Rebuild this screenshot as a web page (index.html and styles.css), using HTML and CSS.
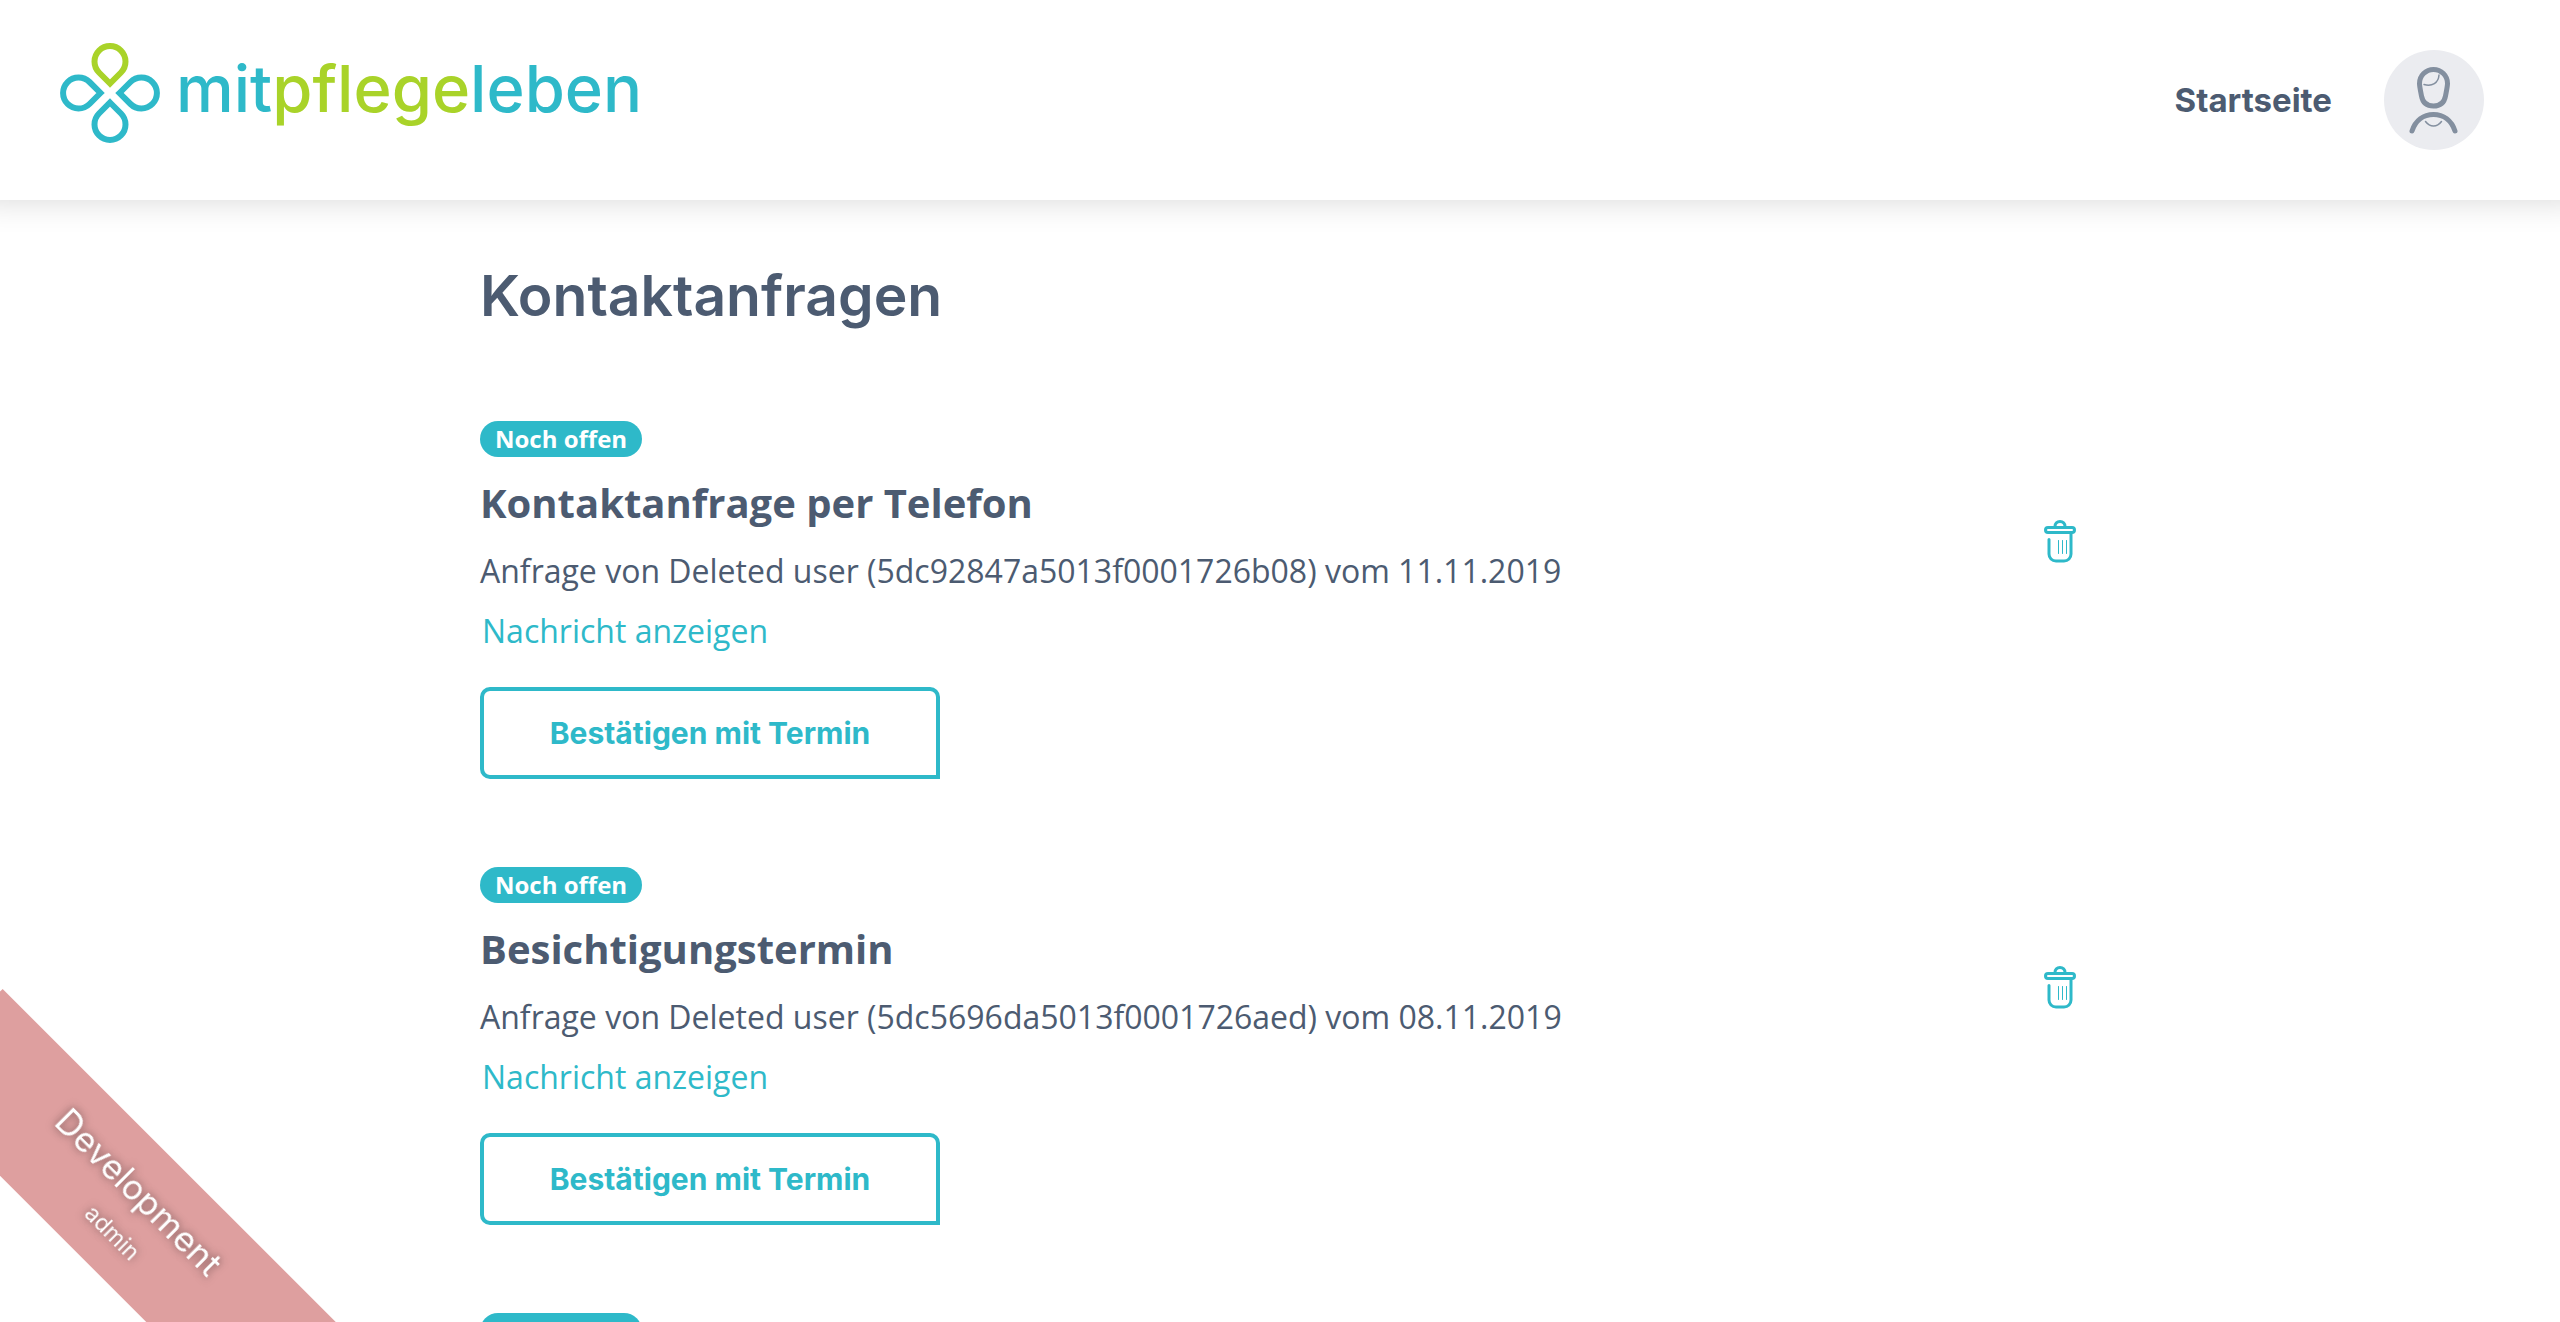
FILE: index.html
```html
<!DOCTYPE html>
<html lang="de">
<head>
<meta charset="utf-8">
<meta name="viewport" content="width=device-width, initial-scale=1">
<title>Kontaktanfragen – mitpflegeleben</title>
<link rel="stylesheet" href="styles.css">
</head>
<body>
<svg class="sprite" aria-hidden="true">
  <symbol id="trash" viewBox="24 20 32 43">
    <g fill="none" stroke="currentColor" stroke-width="3" stroke-linecap="round" stroke-linejoin="round">
      <path d="M35 26.500c0-3 2-5 5-5s5 2 5 5"/>
      <rect x="25.500" y="27.500" width="29" height="5" rx="2.500"/>
      <path d="M29 39.500V54c0 4 3 7 7 7h8c4 0 7-3 7-7V33"/>
      <path stroke-width="1" d="M38.500 40.500v13M42.500 40.500v13M46.500 40.500v13"/>
    </g>
  </symbol>
</svg>
<header class="site-header">
  <a class="logo" href="#">
    <svg class="logo-mark" viewBox="0 0 100 100" aria-hidden="true">
      <g fill="none" stroke-width="6" stroke-linejoin="miter">
        <path class="leaf-green" d="M50 40.500l-11-11a15.500 15.500 0 1 1 22 0z"/>
        <path class="leaf-teal" d="M50 40.500l-11-11a15.500 15.500 0 1 1 22 0z" transform="rotate(90 50 50)"/>
        <path class="leaf-teal" d="M50 40.500l-11-11a15.500 15.500 0 1 1 22 0z" transform="rotate(180 50 50)"/>
        <path class="leaf-teal" d="M50 40.500l-11-11a15.500 15.500 0 1 1 22 0z" transform="rotate(270 50 50)"/>
      </g>
    </svg>
    <span class="logo-text">mit<span class="logo-accent">pflege</span>leben</span>
  </a>
  <nav class="main-nav">
    <a class="nav-link" href="#">Startseite</a>
    <button class="avatar" type="button" aria-label="Benutzerkonto">
      <svg viewBox="0 0 100 100" fill="none" stroke="#838f9f" stroke-width="5" stroke-linecap="round" aria-hidden="true">
        <path d="M35.500 33.500a14 14 0 0 1 28 0c0 3-1.300 8.500-2 12.500c-1.200 6.500-5.500 10-12 10s-10.800-3.500-12-10c-.700-4-2-9.500-2-12.500z"/>
        <path stroke-width="1.500" d="M40 34.500c8 2.300 14.500-1.500 15-9.500"/>
        <path d="M28 81c3.500-10.500 11.500-16.500 21.500-16.500S67.500 70.500 71 81"/>
        <path stroke-width="1.500" d="M41.500 71.500c4.500 6 11.500 6 16 0"/>
      </svg>
    </button>
  </nav>
</header>
<main class="content">
  <h1 class="page-title">Kontaktanfragen</h1>
  <ul class="requests">
    <li class="request">
      <div class="request-row">
        <div class="request-info">
          <span class="badge">Noch offen</span>
          <h2 class="request-title">Kontaktanfrage per Telefon</h2>
          <p class="request-meta">Anfrage von Deleted user (5dc92847a5013f0001726b08) vom 11.11.2019</p>
          <button class="text-button" type="button">Nachricht anzeigen</button>
        </div>
        <button class="delete" type="button" aria-label="Löschen"><svg aria-hidden="true"><use href="#trash"/></svg></button>
      </div>
      <button class="confirm" type="button">Bestätigen mit Termin</button>
    </li>
    <li class="request">
      <div class="request-row">
        <div class="request-info">
          <span class="badge">Noch offen</span>
          <h2 class="request-title">Besichtigungstermin</h2>
          <p class="request-meta">Anfrage von Deleted user (5dc5696da5013f0001726aed) vom 08.11.2019</p>
          <button class="text-button" type="button">Nachricht anzeigen</button>
        </div>
        <button class="delete" type="button" aria-label="Löschen"><svg aria-hidden="true"><use href="#trash"/></svg></button>
      </div>
      <button class="confirm" type="button">Bestätigen mit Termin</button>
    </li>
    <li class="request">
      <span class="badge">Noch offen</span>
    </li>
  </ul>
</main>
<div class="ribbon">
  <span class="ribbon-env">Development</span>
  <span class="ribbon-role">admin</span>
</div>
</body>
</html>
```
FILE: styles.css
```css
:root {
  --teal: #2eb9c9;
  --green: #a9d329;
  --ink: #4c5b71;
  --display: Inter, sans-serif;
  --body: "Open Sans", sans-serif;
}

* {
  box-sizing: border-box;
}

body {
  margin: 0;
  height: 100vh;
  overflow: hidden;
  background: #fff;
  color: var(--ink);
  font-family: var(--body);
  font-size: 32px;
}

button {
  margin: 0;
  padding: 0;
  border: 0;
  background: none;
  color: inherit;
  font: inherit;
  cursor: pointer;
}

a {
  color: inherit;
  text-decoration: none;
}

.sprite {
  display: none;
}

.site-header {
  display: flex;
  align-items: center;
  justify-content: space-between;
  height: 200px;
  padding: 0 76px 0 60px;
  box-shadow: 0 -24px 32px 24px rgba(0, 0, 0, 0.16);
}

.logo {
  display: flex;
  align-items: center;
  gap: 16px;
  margin-bottom: 14px;
}

.logo-mark {
  width: 100px;
  height: 100px;
  overflow: visible;
}

.leaf-green {
  stroke: var(--green);
}

.leaf-teal {
  stroke: var(--teal);
}

.logo-text {
  padding-bottom: 8px;
  color: var(--teal);
  font-family: var(--display);
  font-size: 65px;
  font-weight: 500;
  line-height: 72px;
}

.logo-accent {
  color: var(--green);
}

.main-nav {
  display: flex;
  align-items: center;
  gap: 52px;
}

.nav-link {
  font-family: var(--display);
  font-size: 33px;
  font-weight: 700;
}

.avatar {
  width: 100px;
  height: 100px;
  border-radius: 50%;
  background: #ebecf0;
}

.avatar svg {
  display: block;
}

.content {
  max-width: 1600px;
  margin: 0 auto;
  padding-top: 64px;
}

.page-title {
  margin: 0 0 93px;
  font-family: var(--display);
  font-size: 57px;
  font-weight: 600;
  line-height: 64px;
}

.requests {
  display: flex;
  flex-direction: column;
  gap: 88px;
  margin: 0;
  padding: 0;
  list-style: none;
}

.request-row {
  display: flex;
  align-items: center;
  justify-content: space-between;
  margin-bottom: 26px;
}

.request-info {
  display: flex;
  flex-direction: column;
  align-items: flex-start;
}

.badge {
  display: block;
  width: fit-content;
  padding: 0 15px;
  border-radius: 18px;
  background: var(--teal);
  color: #fff;
  font-size: 24px;
  font-weight: 700;
  line-height: 36px;
}

.request-title {
  margin: 16px 0 8px;
  font-size: 40px;
  font-weight: 700;
  line-height: 60px;
}

.request-meta {
  margin: 0;
  line-height: 60px;
}

.text-button {
  padding: 0 2px;
  color: var(--teal);
  line-height: 60px;
}

.delete {
  padding: 4px;
  color: var(--teal);
}

.delete svg {
  display: block;
  width: 32px;
  height: 43px;
}

.confirm {
  display: block;
  min-width: 460px;
  height: 92px;
  border: 4px solid var(--teal);
  border-radius: 10px 10px 0 10px;
  color: var(--teal);
  font-family: var(--display);
  font-size: 30px;
  font-weight: 700;
}

.ribbon {
  position: fixed;
  left: -115px;
  bottom: 49px;
  display: flex;
  flex-direction: column;
  align-items: center;
  justify-content: center;
  width: 480px;
  height: 134px;
  background: rgba(190, 64, 64, 0.5);
  color: #fff;
  font-family: var(--display);
  text-shadow: 0 0 8px rgba(0, 0, 0, 0.5);
  transform: rotate(45deg);
}

.ribbon-env {
  font-size: 35px;
  line-height: 56px;
}

.ribbon-role {
  padding-left: 20px;
  font-size: 23px;
  line-height: 40px;
}
```
